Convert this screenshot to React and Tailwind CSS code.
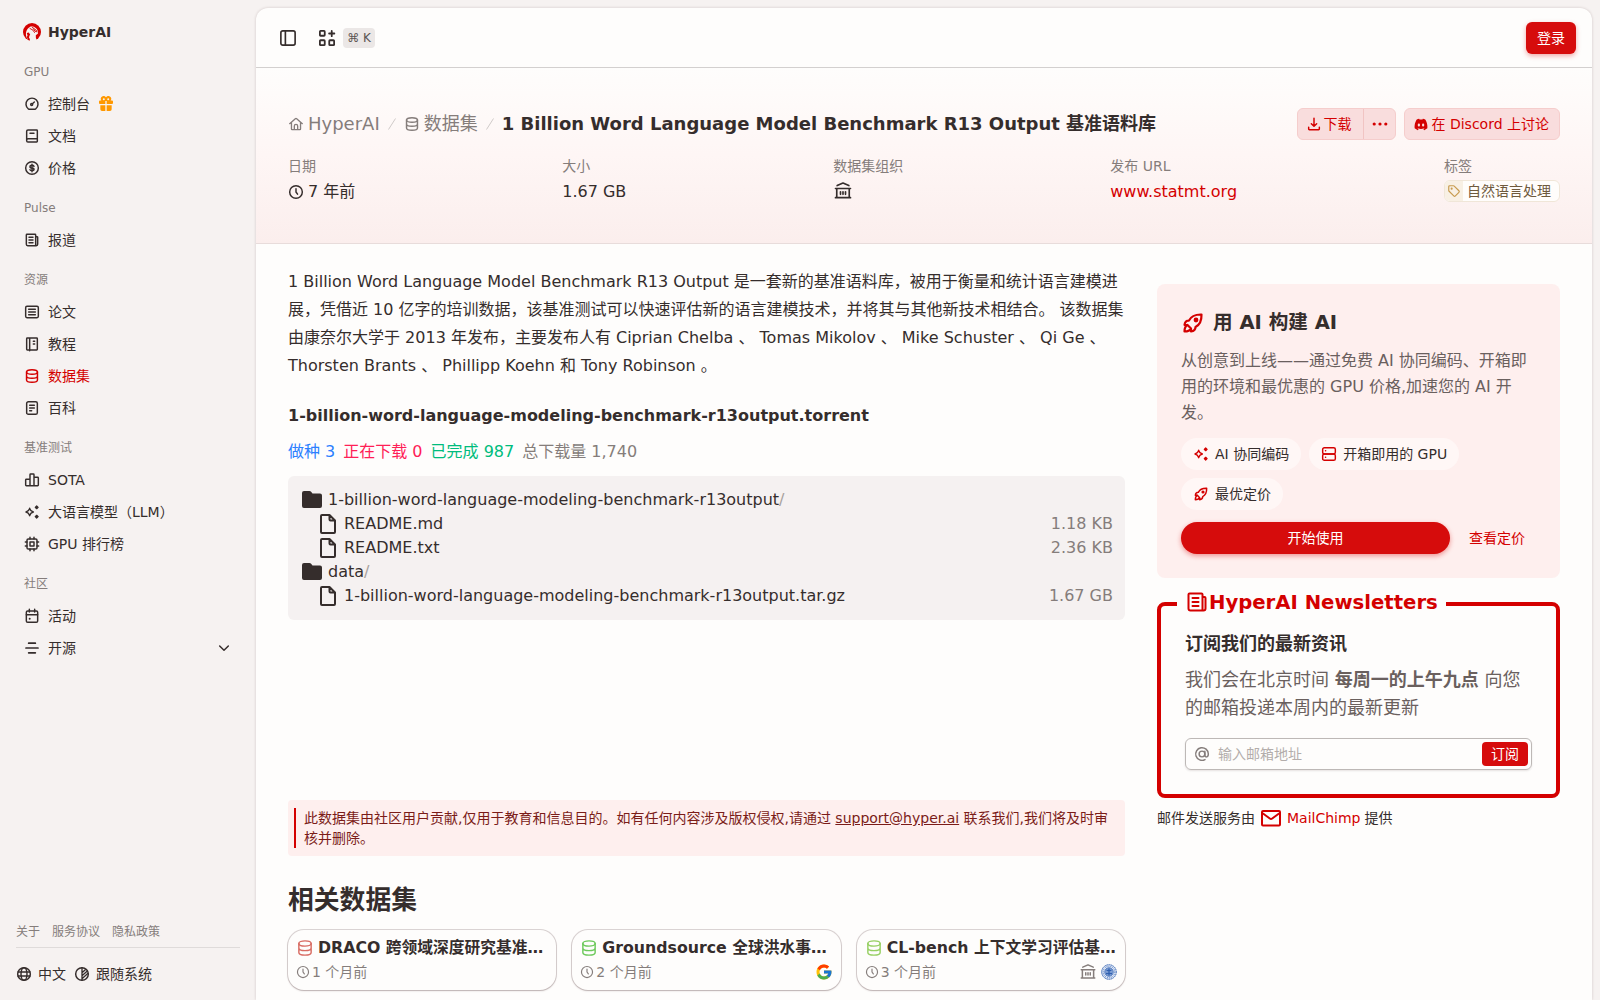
import React from "react";
import { FcGoogle } from "react-icons/fc";
import { FaDiscord } from "react-icons/fa";

const Ic = ({ className = "size-4", w = 2.2, children }) => (
  <svg viewBox="0 0 24 24" fill="none" stroke="currentColor" strokeWidth={w} strokeLinecap="round" strokeLinejoin="round" className={`shrink-0 ${className}`}>
    {children}
  </svg>
);

const Gauge = (p) => (
  <Ic {...p}>
    <path d="M6.500 19.300A9 9 0 1 1 17.500 19.300Q16.500 20 15.500 20H8.500Q7.500 20 6.500 19.300Z" />
    <circle cx="11.500" cy="12.800" r="1.500" />
    <path d="M13 11.200L15.500 9" />
  </Ic>
);
const Book = (p) => (
  <Ic {...p}>
    <path d="M4 18V5a2 2 0 0 1 2-2h13a1 1 0 0 1 1 1v16a1 1 0 0 1-1 1H6a2 2 0 0 1-2-2v-1a2 2 0 0 1 2-2h14M9 8h6" />
  </Ic>
);
const Dollar = (p) => (
  <Ic {...p}>
    <circle cx="12" cy="12" r="9.500" />
    <path d="M15 9.500C14.500 8.500 13.500 8 12 8c-4 0-4 4 0 4s4 4 0 4c-1.500 0-2.600-.500-3-1.500M12 6.500v11" />
  </Ic>
);
const News = (p) => (
  <Ic {...p}>
    <path d="M4.500 3.500h12a1 1 0 0 1 1 1v16h-12a2 2 0 0 1-2-2v-14a1 1 0 0 1 1-1ZM17.500 7h2a1 1 0 0 1 1 1v10.500a2 2 0 0 1-2 2h-1M7.500 8h6M7.500 12h6M7.500 16h6" />
  </Ic>
);
const Paper = (p) => (
  <Ic {...p}>
    <rect x="2.500" y="3.500" width="19" height="17" rx="2" />
    <path d="M7 8h10M7 12h10M7 16h10" />
  </Ic>
);
const Notebook = (p) => (
  <Ic {...p}>
    <path d="M8.500 3v19M5 3h14a1 1 0 0 1 1 1v16a1 1 0 0 1-1 1H5a1 1 0 0 1-1-1V4a1 1 0 0 1 1-1ZM14 8h2M14 12h2" />
  </Ic>
);
const Db = (p) => (
  <Ic {...p}>
    <ellipse cx="12" cy="6" rx="8.200" ry="3.500" />
    <path d="M3.800 6v12c0 2 3.700 3.500 8.200 3.500s8.200-1.500 8.200-3.500V6M3.800 12c0 2 3.700 3.500 8.200 3.500s8.200-1.500 8.200-3.500" />
  </Ic>
);
const Doc = (p) => (
  <Ic {...p}>
    <rect x="4" y="2.500" width="16" height="19" rx="2.500" />
    <path d="M8.500 8h7M8.500 12h7M8.500 16h3" />
  </Ic>
);
const Bars = (p) => (
  <Ic {...p}>
    <path d="M9 20.500V4a1 1 0 0 1 1-1h4a1 1 0 0 1 1 1v16.500M9 20.500H3.500a1 1 0 0 1-1-1V12a1 1 0 0 1 1-1H9M9 20.500h11.500a1 1 0 0 0 1-1V9a1 1 0 0 0-1-1H15" />
  </Ic>
);
const Sparkles = (p) => (
  <Ic {...p}>
    <path d="M8.500 6.500c.900 3.500 2 4.600 5.500 5.500-3.500.900-4.600 2-5.500 5.500-.900-3.500-2-4.600-5.500-5.500 3.500-.900 4.600-2 5.500-5.500Z" />
    <g fill="currentColor" strokeWidth="1.800">
      <path d="M19 2.900 21.200 5 19 7.100 16.900 5ZM19 16.900l2.200 2.100-2.200 2.100-2.100-2.100Z" />
    </g>
  </Ic>
);
const Chip = (p) => (
  <Ic {...p}>
    <rect x="4.500" y="4.500" width="15" height="15" rx="2" />
    <rect x="9" y="9" width="6" height="6" />
    <path d="M9 2v2.500M15 2v2.500M9 19.500V22M15 19.500V22M2 9h2.500M2 15h2.500M19.500 9H22M19.500 15H22" />
  </Ic>
);
const Cal = (p) => (
  <Ic {...p}>
    <rect x="3.500" y="4.500" width="17" height="17" rx="2" />
    <path d="M3.500 10h17M8 2v4M16 2v4" />
    <path strokeWidth="3" d="M8.500 16v.1" />
  </Ic>
);
const Lines = (p) => (
  <Ic {...p}>
    <path strokeWidth="2.600" d="M7 4.800h10M3 12h18M7 19.200h10" />
  </Ic>
);
const Globe = (p) => (
  <Ic {...p}>
    <circle cx="12" cy="12" r="9.500" />
    <ellipse cx="12" cy="12" rx="4.500" ry="9.500" />
    <path d="M3 9h18M3 15h18" />
  </Ic>
);
const Contrast = (p) => (
  <Ic {...p}>
    <circle cx="12" cy="12" r="9.500" />
    <path strokeWidth="2" d="M12 2.500v19M12 10l5-4.500M12 14.500l8-7M12 19l9-8" />
  </Ic>
);
const Clock = (p) => (
  <Ic {...p}>
    <circle cx="12" cy="12" r="9.500" />
    <path d="M12 7v5l2.300 3.300" />
  </Ic>
);
const Home = (p) => (
  <Ic w={2} {...p}>
    <path d="M2.500 11.500 11 4a1.500 1.500 0 0 1 2 0l8.500 7.500M5.200 10v9.500a1 1 0 0 0 1 1h11.600a1 1 0 0 0 1-1V10M9.500 20.500v-5.500a2.500 2.500 0 0 1 5 0v5.500" />
  </Ic>
);
const Bank = (p) => (
  <Ic w={2} {...p}>
    <path d="M5 5.500 12 2.500l7 3M3 9h18M4.500 9v11M19.500 9v11M3 20h18M9 13v3M12 13v3M15 13v3" />
  </Ic>
);
const Rocket = (p) => (
  <Ic {...p}>
    <path d="M8 9.500C10 5.500 14 3.300 20.500 3.500c.200 6.500-2 10.500-6 12.500M8 9.500c-2.500 0-4.200 2-4.500 4.500l3 0 3.500 3.500V20.500c2.500-.300 4.500-2 4.500-4.500M6.500 14C4.500 15 3.500 17.500 3.500 20.500c3 0 5.500-1 6.500-3" />
    <circle cx="15" cy="9" r="1.300" fill="currentColor" />
  </Ic>
);
const Server = (p) => (
  <Ic {...p}>
    <rect x="2.500" y="2.500" width="19" height="9.500" rx="2.500" />
    <rect x="2.500" y="12" width="19" height="9.500" rx="2.500" />
    <path d="M6.800 7.200h.2M6.800 16.800h.2" />
  </Ic>
);
const Tag = (p) => (
  <Ic w={2} {...p}>
    <path d="M3 4.500V11a2 2 0 0 0 .600 1.400l8 8a2 2 0 0 0 2.800 0l6-6a2 2 0 0 0 0-2.800l-8-8A2 2 0 0 0 11 3H4.500A1.500 1.500 0 0 0 3 4.500Z" />
    <circle cx="8" cy="8" r=".8" />
  </Ic>
);
const Mail = (p) => (
  <Ic w={2} {...p}>
    <rect x="3" y="5" width="18" height="14.500" rx="1" />
    <path d="m4 7.500 6.800 5a2 2 0 0 0 2.400 0L20 7.500" />
  </Ic>
);
const At = (p) => (
  <Ic {...p}>
    <circle cx="12" cy="12" r="4.300" />
    <path d="M16.300 8v5.500c0 4 5.200 4 5.200-1.500a9.500 9.500 0 1 0-5 8.400" />
  </Ic>
);
const Download = (p) => (
  <Ic {...p}>
    <path d="M12 3.500V15M8 11.500l4 4 4-4M4 17v2.500a1 1 0 0 0 1 1h14a1 1 0 0 0 1-1V17" />
  </Ic>
);
const Folder = () => (
  <svg viewBox="0 0 24 24" fill="currentColor" className="size-6 shrink-0">
    <path d="M2 5a2 2 0 0 1 2-2h5.500a2 2 0 0 1 1.400.600L12.500 5.500H20a2 2 0 0 1 2 2V18a2 2 0 0 1-2 2H4a2 2 0 0 1-2-2Z" />
  </svg>
);
const File = () => (
  <Ic className="size-6" w={2}>
    <path d="M13.500 3H6a1 1 0 0 0-1 1v16a1 1 0 0 0 1 1h12a1 1 0 0 0 1-1V8.500ZM13.500 3v4.500a1 1 0 0 0 1 1H19" />
  </Ic>
);
const Logo = () => (
  <svg viewBox="0 0 18 18" className="size-[18px] shrink-0">
    <circle cx="9" cy="9" r="9" fill="#d40000" />
    <path fill="#f6f2f1" d="M3.300 13.500C2 8.500 4.500 4.500 8.500 3.200c4 .3 6.800 3.300 6.500 7.300l-2.200 1.800.1 2.700 1.300 3H7l-.3-2.800-2.700.3Z" />
    <path fill="#d40000" d="M5.800 16.800 3.700 14.200 4.500 12.500 3.800 10l2.200-.6.200 1.200 1 .4-1 2.500Z" />
    <path fill="none" stroke="#d40000" strokeWidth=".9" strokeLinecap="round" d="M7 5.500 10 7.200l1.500 2.300M9 4l4.500 3.500M10.500 5.800 12 8.200l2 .6" />
  </svg>
);
const Gift = () => (
  <svg viewBox="0 0 24 24" className="size-4 shrink-0" fill="#ff9800">
    <path d="M1.500 8.300A1.500 1.500 0 0 1 3 6.800h2A4.200 4.200 0 0 1 12 2a4.200 4.200 0 0 1 7 4.800h2a1.500 1.500 0 0 1 1.500 1.500v2.200A1.500 1.500 0 0 1 21 12h-8V7.500h-2V12H3a1.500 1.500 0 0 1-1.500-1.500ZM3.500 13.700H11V22.500H6A2.500 2.500 0 0 1 3.500 20ZM13 13.700h7.500V20a2.500 2.500 0 0 1-2.500 2.500h-5Z" />
    <circle cx="8.700" cy="4.800" r="1.500" fill="#f6f2f1" />
    <circle cx="15.300" cy="4.800" r="1.500" fill="#f6f2f1" />
  </svg>
);
const Seal = () => (
  <svg viewBox="0 0 16 16" className="size-4 shrink-0" fill="none" stroke="#2f5fb0">
    <circle cx="8" cy="8" r="7.300" fill="#dfe7f6" strokeWidth="1" strokeDasharray="1.500 .6" />
    <circle cx="8" cy="8" r="5.800" strokeWidth=".8" strokeDasharray="1 1" />
    <circle cx="8" cy="8" r="4.200" fill="#8fabdb" strokeWidth=".8" />
    <path d="M8 4.500v7M5.500 6.500h5M5 9.500h6" strokeWidth="1.300" />
  </svg>
);
const Slash = () => (
  <svg viewBox="0 0 8 12" className="mx-2 h-3 w-2 text-[#cfcac8]" fill="none" stroke="currentColor">
    <path d="M.5 11.500 7.500.5" />
  </svg>
);

const groups = [
  ["GPU", [["控制台", Gauge], ["文档", Book], ["价格", Dollar]]],
  ["Pulse", [["报道", News]]],
  ["资源", [["论文", Paper], ["教程", Notebook], ["数据集", Db], ["百科", Doc]]],
  ["基准测试", [["SOTA", Bars], ["大语言模型（LLM）", Sparkles], ["GPU 排行榜", Chip]]],
  ["社区", [["活动", Cal], ["开源", Lines]]],
];

const Sidebar = () => (
  <aside className="flex w-64 shrink-0 flex-col text-sm">
    <div className="flex h-14 items-center gap-[7px] pt-2 pl-[23px] font-bold">
      <Logo />
      <span>HyperAI</span>
    </div>
    {groups.map(([label, items]) => (
      <section key={label} className="pb-2">
        <h2 className="flex h-8 items-center pl-6 text-xs text-[#857d7b]">{label}</h2>
        {items.map(([name, Icon]) => (
          <div key={name} className={`flex h-8 items-center gap-2 pr-6 pl-6 ${name === "数据集" ? "text-[#d40000]" : ""}`}>
            <Icon />
            <span>{name}</span>
            {name === "控制台" && <Gift />}
            {name === "开源" && (
              <Ic className="ml-auto size-4">
                <path d="m5.500 9 6.500 6.500L18.500 9" />
              </Ic>
            )}
          </div>
        ))}
      </section>
    ))}
    <div className="mt-auto px-4 pb-3">
      <div className="flex h-8 items-center gap-3 border-b border-[#dfdbda] text-xs text-[#857d7b]">
        <span>关于</span>
        <span>服务协议</span>
        <span>隐私政策</span>
      </div>
      <div className="mt-3 flex h-7 items-center">
        <Globe />
        <span className="ml-1.5">中文</span>
        <Contrast className="ml-2 size-4" />
        <span className="ml-1.5">跟随系统</span>
      </div>
    </div>
  </aside>
);

const Meta = ({ label, children }) => (
  <div>
    <div className="h-5 text-sm leading-5 text-[#857d7b]">{label}</div>
    <div className="mt-1 flex h-6 items-center gap-1">{children}</div>
  </div>
);

const Row = ({ file, name, size }) => (
  <div className={`flex h-6 items-center gap-1 ${file ? "pl-4" : ""}`}>
    {file ? <File /> : <Folder />}
    <span>
      {name}
      {!file && <span className="text-[#a8a29e]">/</span>}
    </span>
    {size && <span className="ml-auto text-[#857d7b]">{size}</span>}
  </div>
);

const Pill = ({ icon: Icon, children }) => (
  <span className="flex h-8 items-center gap-1.5 rounded-full bg-[#fff7f6] px-3 text-sm">
    <Icon className="size-4 text-[#d40000]" />
    {children}
  </span>
);

const related = [
  ["DRACO 跨领域深度研究基准…", "1 个月前", "text-[#d86b62]"],
  ["Groundsource 全球洪水事…", "2 个月前", "text-[#6cc95b]"],
  ["CL-bench 上下文学习评估基…", "3 个月前", "text-[#96cf62]"],
];

export default function App() {
  return (
    <div className="flex h-screen w-full overflow-hidden bg-[#f6f2f1] font-['DejaVu_Sans','Noto_Sans_CJK_SC',sans-serif] text-[#352d2c]">
      <Sidebar />
      <main className="mt-2 mr-2 min-w-0 flex-1 overflow-hidden rounded-t-xl bg-[#fefdfc] shadow-[0_0_3px_rgba(60,30,30,0.2)]">
        <header className="flex h-[60px] items-center border-b border-[#d3d0cf] pr-4 pl-6">
          <Ic className="-ml-px size-[18px]">
            <rect x="2.500" y="2.500" width="19" height="19" rx="2.500" />
            <path d="M8.500 2.500v19" />
          </Ic>
          <Ic className="ml-[21px] size-[18px]" w={2.4}>
            <rect x="2.500" y="2.500" width="6.500" height="6.500" rx="1" />
            <rect x="2.500" y="15" width="6.500" height="6.500" rx="1" />
            <rect x="15" y="15" width="6.500" height="6.500" rx="1" />
            <path d="M18.300 2.500v7M14.800 6h7" />
          </Ic>
          <kbd className="ml-[7px] flex h-5 w-8 items-center justify-center rounded bg-[#ebe7e6] font-['DejaVu_Sans'] text-xs whitespace-pre text-[#5c5553]">⌘ K</kbd>
          <button className="ml-auto h-8 rounded-md bg-[#d60c0c] px-[11px] text-sm text-white shadow-[0_2px_5px_rgba(214,12,12,0.35)]">登录</button>
        </header>

        <section className="h-44 border-b border-[#e8dcdb] bg-gradient-to-b from-[#fefdfc] via-[#fef6f5] to-[#fbeeed] px-8 pt-10">
          <div className="flex h-8 items-center justify-between">
            <div className="flex items-center text-lg">
              <span className="flex items-center gap-1 text-[#857d7b]">
                <Home /> HyperAI
              </span>
              <Slash />
              <span className="flex items-center gap-1 text-[#857d7b]">
                <Db /> 数据集
              </span>
              <Slash />
              <h1 className="font-bold">1 Billion Word Language Model Benchmark R13 Output 基准语料库</h1>
            </div>
            <div className="flex gap-2 text-sm text-[#d40000]">
              <div className="flex h-8 rounded-md border border-[#f5cdcc] bg-[#f9dddd]">
                <span className="flex items-center gap-px pr-3 pl-2">
                  <Download /> 下载
                </span>
                <span className="flex w-8 items-center justify-center border-l border-[#f1c4c3]">
                  <svg viewBox="0 0 16 16" className="size-4" fill="currentColor">
                    <circle cx="2.200" cy="8" r="1.600" />
                    <circle cx="8" cy="8" r="1.600" />
                    <circle cx="13.800" cy="8" r="1.600" />
                  </svg>
                </span>
              </div>
              <span className="flex h-8 items-center rounded-md border border-[#f5cdcc] bg-[#f9dddd] pr-2.5 pl-[9px]">
                <FaDiscord className="mr-[3px] h-[13px] w-3.5" preserveAspectRatio="none" />在 Discord 上讨论
              </span>
            </div>
          </div>
          <div className="mt-4 flex justify-between">
            <Meta label="日期">
              <Clock /> 7 年前
            </Meta>
            <Meta label="大小">1.67 GB</Meta>
            <Meta label="数据集组织">
              <Bank className="mb-0.5 size-5" />
            </Meta>
            <Meta label="发布 URL">
              <span className="text-[#d40000]">www.statmt.org</span>
            </Meta>
            <Meta label="标签">
              <span className="mb-0.5 flex h-[22px] items-center overflow-hidden rounded-md border border-[#f0e6d8] bg-[#fffdfb] text-sm text-[#6f5a3d]">
                <span className="flex h-full w-[18px] items-center justify-center bg-[#f8f0e4] text-[#c79a4e]">
                  <Tag className="size-3.5" />
                </span>
                <span className="px-1 pr-2">自然语言处理</span>
              </span>
            </Meta>
          </div>
        </section>

        <div className="flex gap-8 px-8">
          <div className="w-[837px] shrink-0">
            <p className="mt-6 leading-7">
              1 Billion Word Language Model Benchmark R13 Output 是一套新的基准语料库，被用于衡量和统计语言建模进
              <br />
              展，凭借近 10 亿字的培训数据，该基准测试可以快速评估新的语言建模技术，并将其与其他新技术相结合。 该数据集
              <br />由康奈尔大学于 2013 年发布，主要发布人有 Ciprian Chelba 、 Tomas Mikolov 、 Mike Schuster 、 Qi Ge 、
              <br />
              Thorsten Brants 、 Phillipp Koehn 和 Tony Robinson 。
            </p>
            <h3 className="mt-6 leading-6 font-bold">1-billion-word-language-modeling-benchmark-r13output.torrent</h3>
            <div className="mt-3 flex h-6 items-center gap-2">
              <span className="text-[#2b7fff]">做种 3</span>
              <span className="text-[#ff2056]">正在下载 0</span>
              <span className="text-[#00bc7d]">已完成 987</span>
              <span className="text-[#857d7b]">总下载量 1,740</span>
            </div>
            <div className="mt-3 rounded-md bg-[#f5f1f1] p-3">
              <Row name="1-billion-word-language-modeling-benchmark-r13output" />
              <Row file name="README.md" size="1.18 KB" />
              <Row file name="README.txt" size="2.36 KB" />
              <Row name="data" />
              <Row file name="1-billion-word-language-modeling-benchmark-r13output.tar.gz" size="1.67 GB" />
            </div>
            <div className="mt-[180px] rounded bg-[#feefee] px-1.5 py-2 text-sm leading-5 text-[#7b1c18]">
              <div className="border-l-2 border-[#d40000] pl-2">
                此数据集由社区用户贡献,仅用于教育和信息目的。如有任何内容涉及版权侵权,请通过 <span className="underline">support@hyper.ai</span> 联系我们,我们将及时审
                <br />
                核并删除。
              </div>
            </div>
            <h2 className="mt-[26px] text-[25.800px] leading-9 font-bold">相关数据集</h2>
            <div className="mt-3 grid grid-cols-3 gap-4">
              {related.map(([title, age, color], i) => (
                <article key={title} className="h-[60px] min-w-0 rounded-2xl px-2 pt-1.5 shadow-[0_1px_2px_rgba(60,30,30,0.2),0_0_0_1px_#dcd5d5]">
                  <div className="flex h-6 items-center gap-1">
                    <Db className={`size-[18px] ${color}`} w={1.9} />
                    <h4 className="text-[15.750px] font-bold whitespace-nowrap">{title}</h4>
                  </div>
                  <div className="flex h-6 items-center text-sm text-[#857d7b]">
                    <Clock className="mr-0.5 size-3.5" w={2} />
                    {age}
                    <span className="ml-auto flex items-center gap-1">
                      {i === 1 && <FcGoogle className="size-[18px]" />}
                      {i === 2 && <Bank className="size-[18px]" />}
                      {i === 2 && <Seal />}
                    </span>
                  </div>
                </article>
              ))}
            </div>
          </div>

          <aside className="mt-10 min-w-0 flex-1">
            <section className="rounded-lg bg-[#feefee] p-6">
              <h2 className="flex h-7 items-center gap-2 pt-px text-[19.6px] font-bold">
                <Rocket className="size-6 text-[#d40000]" />用 AI 构建 AI
              </h2>
              <p className="mt-3 leading-[26px] text-[#6a605e]">
                从创意到上线——通过免费 AI 协同编码、开箱即
                <br />
                用的环境和最优惠的 GPU 价格,加速您的 AI 开
                <br />
                发。
              </p>
              <div className="mt-3 flex flex-wrap gap-2">
                <Pill icon={Sparkles}>AI 协同编码</Pill>
                <Pill icon={Server}>开箱即用的 GPU</Pill>
                <Pill icon={Rocket}>最优定价</Pill>
              </div>
              <div className="mt-3 flex gap-1.5 text-sm">
                <button className="h-8 flex-1 rounded-full bg-[#d60c0c] text-white shadow-[0_2px_5px_rgba(214,12,12,0.4)]">开始使用</button>
                <button className="h-8 pr-[11px] pl-[13px] text-[#d40000]">查看定价</button>
              </div>
            </section>
            <fieldset className="mt-3 rounded-lg border-4 border-[#d40000] px-6 pb-6">
              <legend className="-ml-2 flex h-7 items-center px-2 pb-0.5 text-[19.650px] font-bold text-[#d40000]">
                <News className="mb-0.5 size-6" w={2} />
                HyperAI Newsletters
              </legend>
              <h3 className="mt-3 text-lg leading-7 font-bold">订阅我们的最新资讯</h3>
              <p className="mt-2 text-lg leading-7 text-[#6a605e]">
                我们会在北京时间 <strong className="font-bold">每周一的上午九点</strong> 向您
                <br />
                的邮箱投递本周内的最新更新
              </p>
              <div className="mt-4 flex h-8 items-center rounded-md border border-[#bdb8b6] pr-[3px] pl-2 text-sm shadow-[0_1px_2px_rgba(60,30,30,0.12)]">
                <At className="size-4 text-[#857d7b]" />
                <span className="ml-2 text-[#b3adab]">输入邮箱地址</span>
                <button className="ml-auto h-6 rounded bg-[#d60c0c] px-[9px] text-white">订阅</button>
              </div>
            </fieldset>
            <p className="mt-2 flex h-6 items-center gap-1 text-sm">
              邮件发送服务由
              <Mail className="size-6 text-[#d40000]" />
              <span className="text-[#d40000]">MailChimp</span> 提供
            </p>
          </aside>
        </div>
      </main>
    </div>
  );
}
